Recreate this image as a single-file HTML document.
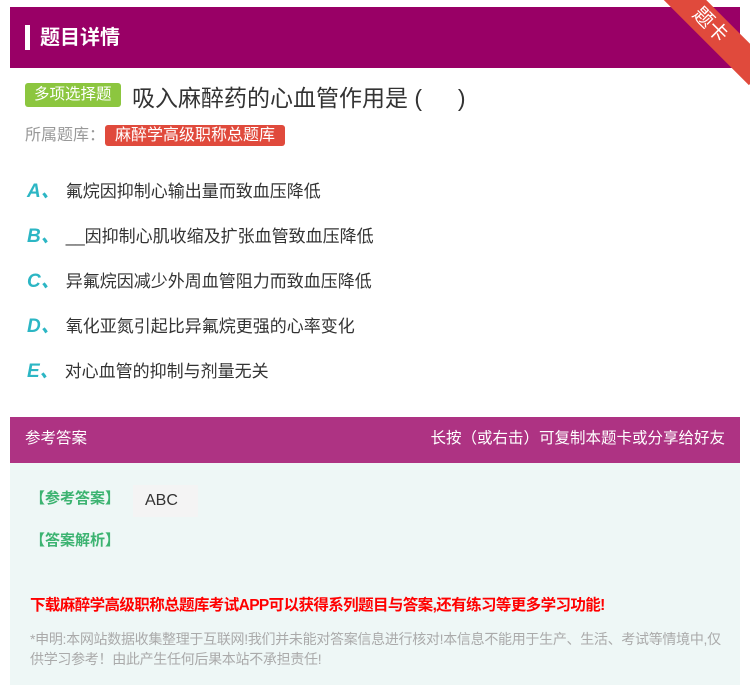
<!DOCTYPE html>
<html><head><meta charset="utf-8"><style>
*{margin:0;padding:0;box-sizing:border-box}
body{width:750px;height:685px;background:#fff;font-family:"Liberation Sans","Noto Sans CJK SC",sans-serif;position:relative;overflow:hidden}
.hd{position:absolute;left:10px;top:7px;width:730px;height:61px;background:#990066}
.hd .bar{position:absolute;left:15px;top:18px;width:5px;height:25px;background:#fff}
.hd .t{position:absolute;left:30px;top:14px;color:#fff;font-size:20px;font-weight:bold}
.rib{position:absolute;right:-30px;top:10px;width:140px;height:30px;background:#e04a3c;transform:rotate(45deg);color:#fff;font-size:20px;text-align:center;line-height:30px;transform-origin:center}
.tag{position:absolute;left:25px;top:83px;background:#8cc63f;color:#fff;font-size:15.5px;padding:0 9px;height:24px;line-height:24px;border-radius:3px}
.q{position:absolute;left:132px;top:79px;font-size:23px;color:#333}
.lib{position:absolute;left:25px;top:121px;font-size:16px;color:#999}
.lib span{background:#e04a3c;color:#fff;padding:2px 10px;border-radius:3px;margin-left:0px;font-size:16px}
.op{position:absolute;left:27px;font-size:17px;color:#333}
.op b{color:#2cb6c4;font-style:italic;font-size:19px;margin-right:6px}
.ans{position:absolute;left:10px;top:417px;width:730px;height:268px;background:#eef7f6}
.ah{height:46px;background:#ae3383;color:#fff;font-size:15.5px;line-height:44px;padding:0 15px}
.ah .r{float:right}
.g{position:absolute;color:#3cb371;font-size:15px;font-weight:bold}
.dl{position:absolute;left:20px;top:176px;color:#f00;font-size:15.5px;font-weight:bold;letter-spacing:-0.6px}
.note{position:absolute;left:20px;top:212px;width:700px;color:#aaa;font-size:14px;line-height:20px;letter-spacing:-0.3px}
.abc{position:absolute;left:123px;top:68px;width:65px;height:32px;background:#f4f4f4;font-size:16px;color:#333;line-height:32px;padding-left:12px}
</style></head><body>
<div class="hd"><div class="bar"></div><div class="t">题目详情</div></div>
<div class="rib">题卡</div>
<div class="tag">多项选择题</div>
<div class="q">吸入麻醉药的心血管作用是 (　&nbsp;&nbsp;)</div>
<div class="lib">所属题库：<span>麻醉学高级职称总题库</span></div>
<div class="op" style="top:176px"><b>A、</b>氟烷因抑制心输出量而致血压降低</div>
<div class="op" style="top:221px"><b>B、</b>__因抑制心肌收缩及扩张血管致血压降低</div>
<div class="op" style="top:266px"><b>C、</b>异氟烷因减少外周血管阻力而致血压降低</div>
<div class="op" style="top:311px"><b>D、</b>氧化亚氮引起比异氟烷更强的心率变化</div>
<div class="op" style="top:356px"><b>E、</b>对心血管的抑制与剂量无关</div>
<div class="ans">
<div class="ah">参考答案<span class="r">长按（或右击）可复制本题卡或分享给好友</span></div>
<div class="g" style="left:20px;top:70px">【参考答案】</div>
<div class="abc">ABC</div>
<div class="g" style="left:20px;top:112px">【答案解析】</div>
<div class="dl">下载麻醉学高级职称总题库考试APP可以获得系列题目与答案,还有练习等更多学习功能!</div>
<div class="note">*申明:本网站数据收集整理于互联网!我们并未能对答案信息进行核对!本信息不能用于生产、生活、考试等情境中,仅供学习参考！由此产生任何后果本站不承担责任!</div>
</div>
</body></html>
